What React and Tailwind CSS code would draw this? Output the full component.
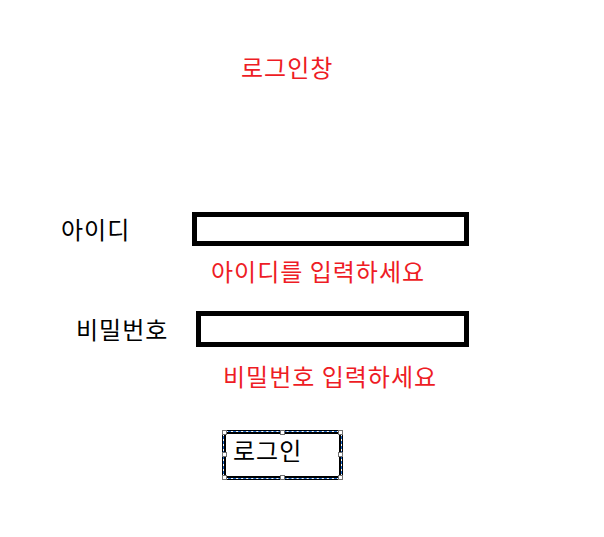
const handle = "absolute w-[5px] h-[5px] bg-white border border-[#707070]";

function Field({ label, labelClass, boxClass, hint, hintClass }) {
  return (
    <div className="flex flex-col">
      <div className="flex items-center">
        <div className={labelClass + " text-[24px] leading-none tracking-[1px] text-black"}>{label}</div>
        <div className={boxClass + " border-[5px] border-black"}></div>
      </div>
      <div className={hintClass + " text-[24px] leading-none tracking-[1px] text-[#ee1c25]"}>{hint}</div>
    </div>
  );
}

export default function App() {
  return (
    <div className="w-[604px] h-[537px] bg-white relative overflow-hidden flex flex-col" style={{ fontFamily: '"Noto Sans CJK KR", "Noto Sans", sans-serif' }}>
      <div className="pt-[55px] pl-[241px] text-[24px] leading-none tracking-[1px] text-[#ee1c25]">로그인창</div>

      <div className="mt-[133px] flex flex-col gap-[28px]">
        <Field label="아이디" labelClass="ml-[61px] w-[131px]" boxClass="w-[277px] h-[34px]"
          hint="아이디를 입력하세요" hintClass="mt-[13px] pl-[211px]" />
        <Field label="비밀번호" labelClass="ml-[76px] w-[120px]" boxClass="w-[273px] h-[36px]"
          hint="비밀번호 입력하세요" hintClass="mt-[17px] pl-[223px]" />
      </div>

      <div className="mt-[42px] ml-[222px] relative w-[121px] h-[50px] border-[4px] border-black bg-white">
        <div className="absolute inset-[-3px] border border-white"></div>
        <div className="absolute inset-[-3px] border border-dashed border-[#1560c0]"></div>
        <div className="pl-[7px] pt-[4px] text-[24px] leading-none tracking-[1px] text-black">로그인</div>
        <div className={handle + " -left-[4px] -top-[4px]"}></div>
        <div className={handle + " left-[54px] -top-[4px]"}></div>
        <div className={handle + " -right-[4px] -top-[4px]"}></div>
        <div className={handle + " -left-[4px] top-[18px]"}></div>
        <div className={handle + " -right-[4px] top-[18px]"}></div>
        <div className={handle + " -left-[4px] -bottom-[4px]"}></div>
        <div className={handle + " left-[54px] -bottom-[4px]"}></div>
        <div className={handle + " -right-[4px] -bottom-[4px]"}></div>
      </div>
    </div>
  );
}
